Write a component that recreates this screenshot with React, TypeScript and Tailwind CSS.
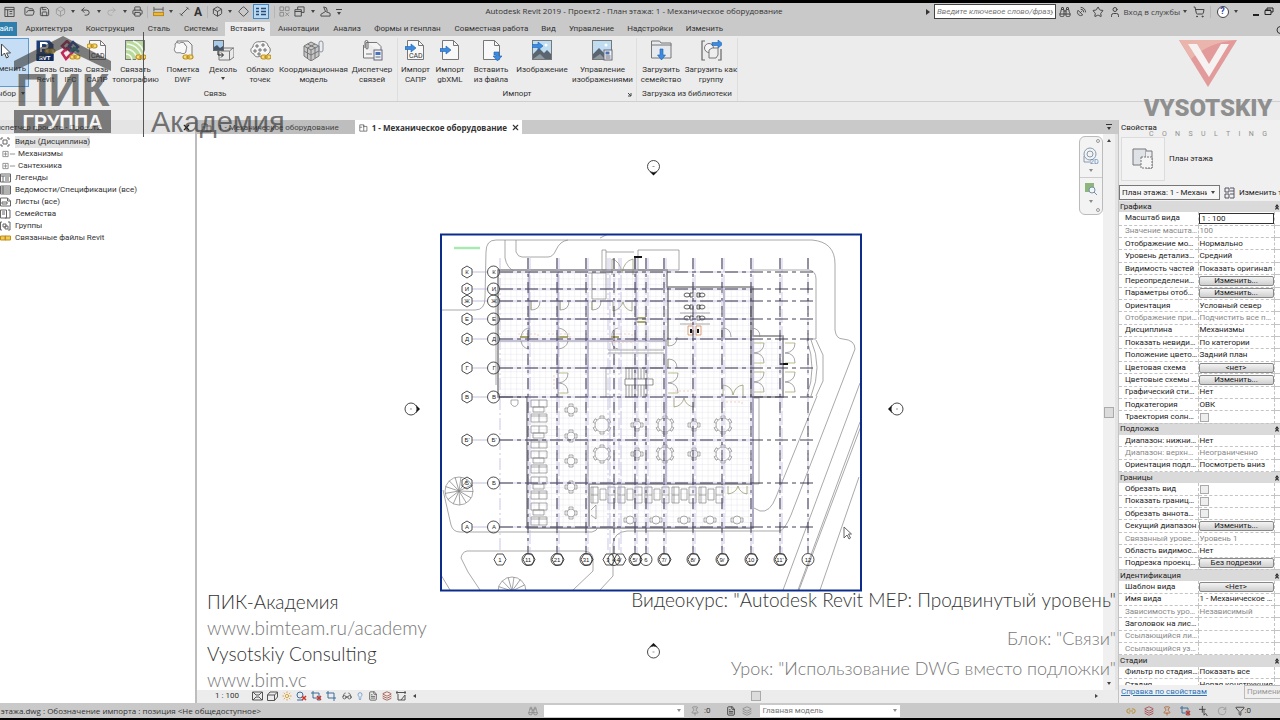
import React from 'react';
import { clsx } from 'clsx';
import {
  Binoculars,
  Box,
  ChevronsUp,
  Diamond,
  FileText,
  Filter,
  FolderOpen,
  Glasses,
  Layers,
  Lightbulb,
  Link2,
  Pin,
  Printer,
  Redo2,
  RotateCw,
  SatelliteDish,
  Save,
  ShoppingCart,
  Star,
  Sun,
  Undo2,
  User,
  X,
} from 'lucide-react';

interface RibbonItem {
  label: string[];
  width: string;
  icon: React.ReactNode;
  arrow?: boolean;
}

interface PropertyRow {
  name: string;
  value?: string;
  kind?: 'text' | 'button' | 'check' | 'input' | 'header';
  muted?: boolean;
}

/* ---------- shared glyphs ---------- */

const Caret: React.FC<{ className?: string }> = ({ className }) => (
  <svg viewBox="0 0 6 4" className={clsx('h-1 w-1.5 shrink-0 fill-[#444]', className)}>
    <path d="M1 0h4L3 3z" />
  </svg>
);

const Chain: React.FC<{ x: number; y: number }> = ({ x, y }) => (
  <g transform={`translate(${x} ${y})`} fill="#f7dc7a" stroke="#c0901c" strokeWidth="1.2">
    <rect x="0" y="0" width="5.5" height="4" rx="2" />
    <rect x="4.5" y="0" width="5.5" height="4" rx="2" />
    <path d="M3 2h4" />
  </g>
);

const BlueArrow: React.FC<{ transform: string }> = ({ transform }) => (
  <path d="M0 2.5h6V0l5 4-5 4V5.5H0z" transform={transform} fill="#3d8be0" stroke="#1f5fae" strokeWidth=".6" />
);

const Page: React.FC<{ children?: React.ReactNode }> = ({ children }) => (
  <>
    <path d="M2.500 .5h11l5 5v14h-16z" fill="#f8f8f8" stroke="#777" />
    <path d="M13.500 .5v5h5" fill="none" stroke="#777" />
    {children}
  </>
);

const RibbonIcon: React.FC<{ children: React.ReactNode }> = ({ children }) => (
  <svg viewBox="0 0 21 21" className="h-[21px] w-[21px]">
    {children}
  </svg>
);

const Landscape = () => (
  <>
    <rect x=".5" y=".5" width="19" height="19" fill="#bfdcf0" stroke="#777" />
    <circle cx="14" cy="5" r="1.500" fill="#fff" />
    <path d="M1 19v-5l6-6 5 5 3-3 4 4v5z" fill="#596672" />
    <path d="M1 19l7-5 5 5z" fill="#9098a0" />
  </>
);

/* ---------- ribbon content ---------- */

const linkItems: RibbonItem[] = [
  {
    label: ['Связь', 'Revit'],
    width: 'w-[25px]',
    icon: (
      <RibbonIcon>
        <path d="M1.500 .5h13l4 4v16h-17z" fill="#1d3f77" />
        <path d="M6 12V3h4a2.500 2.500 0 010 5H7" fill="none" stroke="#fff" strokeWidth="2" />
        <rect x="1.500" y="14" width="17" height="7" fill="#0d2b60" />
        <text x="4" y="20" fontSize="6" fontWeight="bold" fill="#fff">RVT</text>
        <Chain x={10} y={9} />
      </RibbonIcon>
    ),
  },
  {
    label: ['Связь', 'IFC'],
    width: 'w-[25px]',
    icon: (
      <RibbonIcon>
        <g fill="none" strokeWidth="2.500">
          <path d="M2 6l5-5 4 4-5 5z" stroke="#b5325d" />
          <path d="M9 6l4-4 5 5-5 4z" stroke="#3551a0" />
          <path d="M2 13l5-5 5 5-6 6z" stroke="#c02a5c" />
          <path d="M10 12l4-4 5 4" stroke="#36889b" />
        </g>
        <Chain x={10} y={15} />
      </RibbonIcon>
    ),
  },
  {
    label: ['Связь', 'САПР'],
    width: 'w-[28px]',
    icon: (
      <RibbonIcon>
        <Page>
          <text x="4" y="18" fontSize="7" fill="#333">CAD</text>
        </Page>
        <Chain x={0} y={4} />
      </RibbonIcon>
    ),
  },
  {
    label: ['Связать', 'топографию'],
    width: 'w-[49px]',
    icon: (
      <RibbonIcon>
        <rect x=".5" y=".5" width="19" height="19" fill="#b8d99b" stroke="#777" />
        <g fill="none" stroke="#f3f8ee" strokeWidth="1.500">
          <path d="M1 14a6 6 0 016 6M1 9a11 11 0 0111 11M2 4a16 16 0 0115 16M8 1a20 20 0 0112 14" />
        </g>
        <Chain x={11} y={15} />
      </RibbonIcon>
    ),
  },
  {
    label: ['Пометка', 'DWF'],
    width: 'w-[46px]',
    icon: (
      <RibbonIcon>
        <path d="M4 3.500V1h11l4 4v13h-9" fill="#f4f4f4" stroke="#777" />
        <path d="M2 4c2-3 4 0 5-1s5-1 5 2c3 1 1 4 1 6 0 3-4 3-5 2s-6 1-6-2c-2-2 1-3 0-7z" fill="#f9f9f9" stroke="#777" />
        <Chain x={10} y={15} />
      </RibbonIcon>
    ),
  },
  {
    label: ['Деколь'],
    width: 'w-[34px]',
    arrow: true,
    icon: (
      <RibbonIcon>
        <path d="M6 11l5-3h10v9l-4 3H6z" fill="#e9e9e9" stroke="#777" />
        <path d="M16.500 20V11h-9M16.500 11L20 8" fill="none" stroke="#777" />
        <rect x=".5" y=".5" width="10" height="10" fill="#a9cbea" stroke="#666" />
        <path d="M1 10V7l3-2 3 3 3-2v4z" fill="#46566a" />
        <path d="M5 11v4h5M8 12.500l2.500 2.500L8 17.500" fill="none" stroke="#222" />
      </RibbonIcon>
    ),
  },
  {
    label: ['Облако', 'точек'],
    width: 'w-[40px]',
    icon: (
      <RibbonIcon>
        <path d="M3 7c0-4 4-6 7-5 4-2 8 1 8 4 3 2 3 6 0 8-2 3-6 3-8 2-3 2-6 0-6-2-4-1-4-6-1-7z" fill="#f6f6f6" stroke="#777" />
        <path d="M6 5h2v2H6zM12 4h2v2h-2zM4 10h2v2H4zM9 9h2v2H9zM14 9h2v2h-2zM8 13h2v2H8z" fill="none" stroke="#555" strokeWidth=".8" />
        <Chain x={11} y={15} />
      </RibbonIcon>
    ),
  },
  {
    label: ['Координационная', 'модель'],
    width: 'w-[67px]',
    icon: (
      <RibbonIcon>
        <path d="M1 6l7-4 8 4v10l-8 5-7-5z" fill="#c6c6c6" stroke="#777" />
        <path d="M1 6l7 4 8-4M8 10v11M1 11l7 4 8-4M4.500 8v10M12 8v10M4.500 4l8 4M12 4L4.500 8" fill="none" stroke="#777" />
        <path d="M16 10V3a2 2 0 014 0v7a2 2 0 01-4 0" fill="none" stroke="#8a95a5" />
      </RibbonIcon>
    ),
  },
  {
    label: ['Диспетчер', 'связей'],
    width: 'w-[50px]',
    icon: (
      <RibbonIcon>
        <path d="M1.500 5v13h13M4 2.500h11l4 4V11" fill="#f4f4f4" stroke="#777" />
        <rect x="12" y="10" width="8" height="10" fill="#eef2f8" stroke="#667" />
        <path d="M13.500 12h5v3h-5z" fill="#4a72b8" />
        <path d="M13.500 17h5" stroke="#667" />
        <path d="M3 8V2a1.500 1.500 0 013 0v6a1 1 0 01-2 0V3" fill="none" stroke="#666" />
        <path d="M4 14h6" stroke="#777" />
      </RibbonIcon>
    ),
  },
];

const importItems: RibbonItem[] = [
  {
    label: ['Импорт', 'САПР'],
    width: 'w-[35px]',
    icon: (
      <RibbonIcon>
        <Page>
          <text x="4" y="18" fontSize="7" fill="#333">CAD</text>
        </Page>
        <BlueArrow transform="translate(0 4)" />
      </RibbonIcon>
    ),
  },
  {
    label: ['Импорт', 'gbXML'],
    width: 'w-[34px]',
    icon: (
      <RibbonIcon>
        <Page />
        <BlueArrow transform="translate(0 6)" />
      </RibbonIcon>
    ),
  },
  {
    label: ['Вставить', 'из файла'],
    width: 'w-[48px]',
    icon: (
      <RibbonIcon>
        <Page />
        <path d="M13 12h5v4h3l-4.500 5-4.500-5h3v-1h-2z" fill="#3d8be0" stroke="#1f5fae" strokeWidth=".6" />
      </RibbonIcon>
    ),
  },
  {
    label: ['Изображение'],
    width: 'w-[54px]',
    icon: (
      <RibbonIcon>
        <Landscape />
        <BlueArrow transform="translate(0 2)" />
      </RibbonIcon>
    ),
  },
  {
    label: ['Управление', 'изображениями'],
    width: 'w-[67px]',
    icon: (
      <RibbonIcon>
        <Landscape />
        <rect x="12" y="10" width="8" height="10" fill="#f5f5f5" stroke="#667" />
        <path d="M13.500 11.500h4v3h-4z" fill="#4a72b8" />
        <path d="M13.500 16h5M13.500 18h5" stroke="#667" />
      </RibbonIcon>
    ),
  },
];

const libraryItems: RibbonItem[] = [
  {
    label: ['Загрузить', 'семейство'],
    width: 'w-[48px]',
    icon: (
      <RibbonIcon>
        <path d="M.5 18V1h8l1.500 2h10v15z" fill="#e6e9ee" stroke="#777" />
        <path d="M.5 5h20" stroke="#777" />
        <BlueArrow transform="translate(14.500 9) rotate(90)" />
      </RibbonIcon>
    ),
  },
  {
    label: ['Загрузить как', 'группу'],
    width: 'w-[52px]',
    icon: (
      <RibbonIcon>
        <path d="M4 1H1v19h3M17 20h3V9" fill="none" stroke="#666" strokeWidth="1.200" />
        <circle cx="8" cy="8" r="4.500" fill="#f5f5f5" stroke="#777" />
        <path d="M8 10l3-2h6v7l-2 3H8z" fill="#eee" stroke="#777" />
        <BlueArrow transform="translate(11 0)" />
      </RibbonIcon>
    ),
  },
];

const RibbonGroup: React.FC<{ title: string; items: RibbonItem[]; launcher?: boolean }> = ({ title, items, launcher }) => (
  <section className="relative flex flex-col border-r border-[#dedede]">
    <div className="flex h-[49px]">
      {items.map((item) => (
        <button key={item.label.join(' ')} className={clsx('flex shrink-0 flex-col items-center pt-0.5', item.width)}>
          {item.icon}
          <span className="mt-1 flex flex-col items-center leading-[10px] whitespace-nowrap">
            {item.label.map((line) => (
              <span key={line}>{line}</span>
            ))}
          </span>
          {item.arrow && <Caret className="mt-0.5" />}
        </button>
      ))}
    </div>
    <h2 className="pt-0.5 text-center leading-[10px]">{title}</h2>
    {launcher && (
      <svg viewBox="0 0 5 5" className="absolute right-1 bottom-1 h-[5px] w-[5px]" fill="none" stroke="#444">
        <path d="M1 1l3 3M4 1v3H1" />
      </svg>
    )}
  </section>
);

/* ---------- title bar ---------- */

const quickIcon = 'h-[11px] w-[11px] shrink-0 text-[#444]';

const Separator = () => <span className="h-3 w-px bg-[#b5b5b5]" />;

const TitleBar = () => (
  <header className="flex h-[19px] shrink-0 items-center bg-[#c9c9c9] pb-0.5">
    <div className="flex w-[342px] shrink-0 items-center justify-between pl-1">
      <svg viewBox="0 0 12 12" className={quickIcon} fill="none" stroke="currentColor">
        <path d="M1 1.500h10v10H1zM1 4h10M4 4v7M6 6h3M6 8.500h3" />
      </svg>
      <span />
      <FolderOpen className={quickIcon} />
      <Save className={quickIcon} />
      <Box className="h-[11px] w-[11px] text-[#999]" />
      <Caret />
      <Undo2 className={quickIcon} />
      <Caret />
      <Redo2 className="h-[11px] w-[11px] text-[#aaa]" />
      <Caret />
      <Printer className={quickIcon} />
      <Separator />
      <svg viewBox="0 0 12 12" className={quickIcon} fill="none" stroke="#555">
        <path d="M1 1v5M11 1v5M1 3.500h10" />
        <rect x=".5" y="7" width="11" height="3.500" fill="#e9b83c" stroke="#b58617" />
      </svg>
      <Caret />
      <svg viewBox="0 0 12 12" className={quickIcon} fill="none" stroke="currentColor">
        <path d="M2 10l8-8M1 8l3 3M8 1l3 3" />
      </svg>
      <span className="text-[12px] font-bold text-[#333]">A</span>
      <Separator />
      <Box className={quickIcon} />
      <Caret />
      <Diamond className={quickIcon} />
      <svg viewBox="0 0 16 15" className="h-[15px] w-4 shrink-0">
        <rect x=".5" y=".5" width="15" height="14" fill="#b9d9f3" stroke="#3d86c6" />
        <path d="M3 4.500h3M3 7.500h3M3 10.500h3M8 4.500h5M8 7.500h5M8 10.500h5" stroke="#2a4c74" strokeWidth="1.500" />
      </svg>
      <Separator />
      <svg viewBox="0 0 12 12" className={quickIcon} fill="none" stroke="#888">
        <path d="M1 1h4v4H1zM7 1h4v4H7zM1 7h4v4H1zM7 7l4 4M11 7l-4 4" />
      </svg>
      <svg viewBox="0 0 12 12" className={quickIcon} fill="none" stroke="currentColor">
        <path d="M1 4h7v7H1zM4 4V1h7v6H8M1 6h7" />
      </svg>
      <Caret />
      <svg viewBox="0 0 12 12" className={quickIcon} fill="none" stroke="currentColor">
        <path d="M4 1l2 5-5 3v2h10V8L6 6M4 1l3 1 1 4" />
      </svg>
      <svg viewBox="0 0 6 6" className="h-1.5 w-1.5 fill-[#444]">
        <path d="M0 0h6v1H0zM1 3h4L3 6z" />
      </svg>
    </div>
    <h1 className="min-w-0 flex-1 truncate pb-0.5 text-center font-['Open_Sans','Noto_Sans',sans-serif] text-[#333]">
      Autodesk Revit 2019 - Проект2 - План этажа: 1 - Механическое оборудование
    </h1>
    <div className="flex w-[354px] shrink-0 items-center text-[#444]">
      <svg viewBox="0 0 4 6" className="mr-1 h-1.5 w-1 fill-[#333]">
        <path d="M0 0l4 3-4 3z" />
      </svg>
      <input
        aria-label="Поиск"
        placeholder="Введите ключевое слово/фразу"
        className="h-[15px] w-[122px] border border-[#444] bg-white px-0.5 italic outline-none placeholder:text-[#777]"
      />
      <div className="flex flex-1 items-center justify-between pr-1.5 pl-[3px]">
        <Binoculars className="h-3 w-3" />
        <SatelliteDish className="h-[11px] w-[11px]" />
        <Star className="h-3 w-3" />
        <button className="flex items-center gap-0.5 font-['Open_Sans','Noto_Sans',sans-serif] whitespace-nowrap">
          <User className="h-3 w-3" />
          Вход в службы
          <Caret />
        </button>
        <ShoppingCart className="h-3 w-3" />
        <Separator />
        <button aria-label="Справка" className="flex items-center gap-1">
          <span className="flex h-3 w-3 items-center justify-center rounded-full border border-[#444] bg-white text-[9px] leading-none font-bold text-[#2b3fa0]">?</span>
          <Caret />
        </button>
        <span className="w-1" />
        <button aria-label="Свернуть" className="mt-1.5 h-0.5 w-1.5 bg-[#222]" />
        <button aria-label="Восстановить">
          <svg viewBox="0 0 10 9" className="h-[9px] w-2.5" fill="none" stroke="#222">
            <path d="M1 3.500h6v4H1zM3 3V1h6v4H7M1 3h6" />
          </svg>
        </button>
      </div>
    </div>
  </header>
);

const menuTabs = [
  { label: 'Архитектура', width: 'w-[60px]' },
  { label: 'Конструкция', width: 'w-[62px]' },
  { label: 'Сталь', width: 'w-9' },
  { label: 'Системы', width: 'w-12' },
  { label: 'Вставить', width: 'w-[45px]' },
  { label: 'Аннотации', width: 'w-[57px]' },
  { label: 'Анализ', width: 'w-10' },
  { label: 'Формы и генплан', width: 'w-[81px]' },
  { label: 'Совместная работа', width: 'w-[87px]' },
  { label: 'Вид', width: 'w-[27px]' },
  { label: 'Управление', width: 'w-[59px]' },
  { label: 'Надстройки', width: 'w-[58px]' },
  { label: 'Изменить', width: 'w-[51px]' },
];

const MenuTabs = () => (
  <nav className="flex h-3.5 shrink-0 bg-[#c9c9c9]">
    <button className="mr-0.5 flex w-[17px] shrink-0 items-center justify-end overflow-hidden bg-[#2f7fae] pr-1 text-white">Файл</button>
    {menuTabs.map(({ label, width }) => (
      <button
        key={label}
        className={clsx('shrink-0 text-center whitespace-nowrap', width, label === 'Вставить' && 'bg-[#ececec]')}
      >
        {label}
      </button>
    ))}
    <svg viewBox="0 0 4 8" className="mt-1 ml-auto h-2 w-1" fill="none" stroke="#333">
      <path d="M4 .5Q1 1 1 4t3 3.500" />
    </svg>
  </nav>
);

const Ribbon = () => (
  <div className="flex h-[66px] shrink-0 border-b border-[#cfcfcf] bg-[#ececec] pt-0.5">
    <section className="w-[33px] shrink-0">
      <button className="flex h-[49px] w-[29px] flex-col items-end overflow-hidden border border-l-0 border-[#5b9bd5] bg-[#c5def5] pr-0.5">
        <svg viewBox="0 0 12 16" className="mt-1 mr-3.5 h-4 w-3" fill="#fff" stroke="#444">
          <path d="M1.500 1v12l3-3 2 5 2-1-2-4h4z" />
        </svg>
        <span className="mt-[5px] leading-[10px]">Изменить</span>
      </button>
      <div className="flex w-[26px] items-center justify-end gap-1 overflow-hidden pt-0.5 leading-[10px]">
        Выбор <Caret />
      </div>
    </section>
    <RibbonGroup title="Связь" items={linkItems} />
    <RibbonGroup title="Импорт" items={importItems} launcher />
    <RibbonGroup title="Загрузка из библиотеки" items={libraryItems} />
  </div>
);

/* ---------- project browser ---------- */

const treeIcons: Record<string, React.ReactNode> = {
  views: <path d="M1 3V1h2M7 1h2v2M9 7v2H7M3 9H1V7M3 3h4v4H3z" />,
  legend: <path d="M.5 1h10v8H.5zM.5 3h10M3 3v6M5 5h4M5 7h4" />,
  table: <path d="M.5 1h10v8H.5zM.5 3h10M.5 5h10M.5 7h10M3 1v8" />,
  sheet: <path d="M.5 1h7l3 3v5H.5zM7.500 1v3h3M2 5h5v2H2z" />,
  family: <path d="M.5 1h6v8h-6zM8 1h2v8H5M2 3h3M2 5h3" />,
  group: <path d="M2 1H.5v8H2M8 1h2v8H8M3 3h3v3H3zM5 5h3v3H5z" />,
  link: <path d="M.5 3h5v4h-5zM5 3h5.500v4H5z" stroke="#c0901c" fill="#f1cc58" />,
};

const treeItems = [
  { label: 'Виды (Дисциплина)', icon: 'views', selected: true },
  { label: 'Механизмы', child: true },
  { label: 'Сантехника', child: true },
  { label: 'Легенды', icon: 'legend' },
  { label: 'Ведомости/Спецификации (все)', icon: 'table' },
  { label: 'Листы (все)', icon: 'sheet' },
  { label: 'Семейства', icon: 'family' },
  { label: 'Группы', icon: 'group' },
  { label: 'Связанные файлы Revit', icon: 'link' },
];

const ProjectBrowser = () => (
  <aside className="flex w-[197px] shrink-0 flex-col border-r-2 border-[#bdbdbd] bg-white">
    <div className="flex h-3.5 items-center justify-between bg-[#e4e4e4] pt-px pr-1">
      <div className="flex w-[101px] justify-end overflow-hidden whitespace-nowrap">Диспетчер проекта - Проект2</div>
      <X className="h-[9px] w-[9px] text-[#222]" strokeWidth={3} />
    </div>
    <ul className="pt-0.5">
      {treeItems.map((item) => (
        <li key={item.label} className="flex h-3 items-center">
          {item.child ? (
            <svg viewBox="0 0 16 8" className="mr-0.5 ml-0.5 h-2 w-3.5" fill="none" stroke="#888">
              <path d="M1 1h6v6H1zM2 4h4M4 2v4M9 4h6" />
            </svg>
          ) : (
            <svg viewBox="0 0 11 10" className="mr-1 h-2.5 w-[11px]" fill="none" stroke="#666">
              {treeIcons[item.icon as string]}
            </svg>
          )}
          <span className={clsx('leading-3', item.selected && 'bg-[#e2e2e2]')}>{item.label}</span>
        </li>
      ))}
    </ul>
  </aside>
);

/* ---------- floor plan ---------- */

const colAxes = [
  { x: 500, label: '1' },
  { x: 528, label: '11' },
  { x: 557, label: '21' },
  { x: 586, label: '31' },
  { x: 608, label: '3' },
  { x: 614, label: '4' },
  { x: 619, label: '4/' },
  { x: 635, label: '5/' },
  { x: 646, label: '6' },
  { x: 664, label: '7/' },
  { x: 693, label: '8/' },
  { x: 722, label: '9/' },
  { x: 751, label: '10' },
  { x: 780, label: "11'" },
  { x: 808, label: '12' },
];

const rowAxes = [
  { y: 272, label: 'К' },
  { y: 289, label: 'И' },
  { y: 301, label: 'Ж' },
  { y: 319, label: 'Е' },
  { y: 339, label: 'Д' },
  { y: 368, label: 'Г' },
  { y: 397, label: 'В' },
  { y: 440, label: "Б'" },
  { y: 483, label: 'Б' },
  { y: 527, label: 'А' },
];

const hexagon = (cx: number, cy: number) =>
  `M${cx - 6} ${cy}l3-5.500h6l3 5.500-3 5.500h-6z`;

const uprightHexagon = (cx: number, cy: number) =>
  `M${cx} ${cy - 6}l5 3v6l-5 3-5-3v-6z`;

const doors = [
  [531, 301, 1], [560, 301, 1], [592, 301, 1],
  [668, 337, 1], [722, 337, -1], [751, 337, -1], [668, 368, -1],
];

const doubleDoors = [
  [558, 373], [668, 373], [754, 343], [754, 372], [785, 343], [785, 372],
];

const range = (count: number) => Array.from({ length: count }, (_, i) => i);

const SmallTable: React.FC<{ x: number; y: number }> = ({ x, y }) => (
  <g transform={`translate(${x} ${y})`}>
    <circle r="4" />
    <path d="M-2-4v-2h4v2M-2 4v2h4V4M-4-2h-2v4h2M4-2h2v4H4" />
  </g>
);

const LargeTable: React.FC<{ x: number; y: number }> = ({ x, y }) => (
  <g transform={`translate(${x} ${y})`}>
    <circle r="7" />
    {range(6).map((i) => (
      <path key={i} d="M-2-7v-2h4v2" transform={`rotate(${i * 60})`} />
    ))}
  </g>
);

const Tree: React.FC<{ x: number; y: number }> = ({ x, y }) => (
  <g transform={`translate(${x} ${y})`}>
    <circle r="14" />
    {range(13).map((i) => (
      <path key={i} d="M0 0L2-14" transform={`rotate(${i * 28})`} />
    ))}
  </g>
);

const ElevationMark: React.FC<{ x: number; y: number; angle: number }> = ({ x, y, angle }) => (
  <g transform={`translate(${x} ${y}) rotate(${angle})`}>
    <path d="M-4 5L0 9l4-4z" fill="#111" />
    <circle r="6" fill="#fff" stroke="#333" strokeWidth=".9" />
    <path d="M-1 0h2" stroke="#999" />
  </g>
);

const FloorPlan = () => (
  <svg viewBox="197 134 906 556" className="absolute inset-0 h-full w-full" fontFamily="Liberation Sans">
    <defs>
      <pattern id="tiles" width="5.800" height="5.800" patternUnits="userSpaceOnUse">
        <path d="M0 0h5.800M0 0v5.800" stroke="#dcdce6" strokeWidth=".7" fill="none" />
      </pattern>
      <clipPath id="sheet">
        <rect x="441" y="234" width="420" height="356" />
      </clipPath>
    </defs>

    <g clipPath="url(#sheet)" fill="none" stroke="#848484" strokeWidth=".7">
      {/* site contours */}
      <path d="M441 310h34q10 0 10-12l1-46q0-12 10-12h316q23 2 23 24v66q1 9 8 9 12 1 12 10L791 515q-6 14-11 16" />
      <path d="M505 240v18q2 10 9 13M516 240v12q2 5 6 5h26q5 0 8-7 4-9 12-10M600 238l8-4" />
      <path d="M817 396L776 497q-6 16-16 14l-6-3M860 383L783 590M860 422L798 590M861 426L799 590M859 477L820 590" />
      <path d="M443 490l8 35q2 7 9 7h132q5-1 6-5M461 558q1-6 6-7h117q9 1 9 8v12l-20 19M461 558l7 14 12 18M441 575l9 15M600 590l13-14v-32q1-12 14-13h153" />
      <path d="M751 270h58q7 1 7 9v60h-3M816 340l7 15v26l-7 15M811 340q12 27 0 56M807 340q10 28 0 56" />
      <path d="M638 250h41v20h-41zM602 250h4v20h-4zM606 252h28" />
      <Tree x={459} y={491} />
      <Tree x={512} y={591} />
      <path d="M454 248h26" stroke="#a9e8b0" strokeWidth="2.500" />

      {/* floor finish */}
      <path d="M500 272h167v17h84v50h31v58h-31v130H528V397h-28z" fill="url(#tiles)" stroke="none" />

      {/* walls */}
      <g stroke="#858585" strokeWidth="1.500">
        <path d="M498 270h169v17h86v49h30v61h-30v131H527V397h-29z" />
        <path d="M588 484h165M589 484v43M668 287v52M751 289v108" />
      </g>
      <path d="M588 273h18v26h-14v-26" stroke="#858585" />
      <path d="M754 398h5v86h-5M496 290v95M588 440v44M608 350h56M608 353h56M606 397v-29h58" />
      <g stroke="#b3afc6">
        <path d="M529 272v68M558 272v125M588 300v97M636 272v67M666 339v145M724 289v50M753 339v188M500 341h167" strokeWidth="1.500" />
      </g>

      {/* stairs */}
      <path d="M626 368v29M629 368v29M632 368v29M635 368v29M638 368v29M641 368v29M644 368v29M647 368v29" stroke="#777" />
      <path d="M625 379h28v6h-28z" fill="#fff" stroke="#666" />

      {/* doors */}
      {doors.map(([x, y, dir]) => (
        <g key={`${x}-${y}`}>
          <path d={`M${x} ${y}v${dir * 9}q9 0 9 ${-dir * 9}`} />
          <path d={`M${x} ${y}v${dir * 9}`} stroke="#a0a05c" />
        </g>
      ))}
      {doubleDoors.map(([x, y]) => (
        <g key={`${x}-${y}`}>
          <path d={`M${x + 10} ${y}q0 9-10 10q10 0 10 10`} />
          <path d={`M${x} ${y}h10M${x} ${y + 20}h10`} stroke="#a0a05c" />
        </g>
      ))}
      <path d="M521 337q1-8 8-9v9M521 341q1 7 8 8M568 337q-1-8-10-9M568 341q-1 7-10 8M612 337q-1-8 6-9M612 341q0 7 6 8" />
      <path d="M520 337h9M558 337h10M611 337h8M637 318h9M637 322h9" stroke="#8d8d3c" strokeWidth="1.500" />
      <path d="M612 275v-16q8 2 10 14 2-12 11-14v16M613 302v9q8-2 10-9 2 8 9 9v-9M674 398v9q8-1 10-9 2 8 10 9v-9M723 396v-11q9 1 10 10 2-9 10-10v11M728 486v8q8-1 10-8 2 7 9 8v-8" stroke="#8d8d60" />
      <path d="M518 334h20v8M548 334h22v8M612 334h20v8h-20zM554 375v15M675 391h18M722 402h20v4" stroke="#f0b9a6" strokeDasharray="2 2" />

      {/* sanitary block */}
      {[295, 307, 318].map((y) => (
        <g key={y} stroke="#222">
          <ellipse cx="687" cy={y} rx="3" ry="2" />
          <path d={`M690 ${y - 2}h3v4h-3zM697 ${y - 2}h3v4h-3z`} />
          <ellipse cx="702" cy={y} rx="3" ry="2" />
        </g>
      ))}
      <path d="M680 313h30M680 324h30" />
      <path d="M688 326h5v9h-5zM696 326h5v9h-5z" stroke="#d07a40" />
      <path d="M691 329v4M698 329v4M634 257h8M780 364h8" stroke="#111" strokeWidth="2" />
      <path d="M635 257v13" stroke="#333" />

      {/* furniture */}
      {[410, 436, 461, 487, 513].map((y) => (
        <g key={y}>
          <SmallTable x={571} y={y} />
          <path d={`M531 ${y - 10}h16v7h-16zM539 ${y - 10}v7M533 ${y - 3}h11v5h-11zM531 ${y + 4}h16v8h-16zM539 ${y + 4}v8M531 ${y + 6}h16`} />
        </g>
      ))}
      {[425, 454].map((y) => (
        <g key={y}>
          {[602, 665, 723].map((x) => <LargeTable key={x} x={x} y={y} />)}
          {[637, 694].map((x) => <SmallTable key={x} x={x} y={y} />)}
        </g>
      ))}
      {[591, 618, 645, 672, 699].map((x) => (
        <path key={x} d={`M${x} 487h7v16h-7zM${x} 495h7M${x + 9} 489h6v11h-6zM${x + 17} 487h7v16h-7zM${x + 17} 495h7M${x + 2} 487v16`} />
      ))}
      {[630, 656, 684, 710, 737].map((x) => (
        <path key={x} d={`M${x - 4} 520a4 4 0 018 0 4 4 0 01-8 0M${x - 4} 518h-2v4h2M${x + 4} 518h2v4h-2`} />
      ))}
      <path d="M511 400h7v4q-3 5-7 0zM591 510l5-5v14l-5-4" />

      {/* axes */}
      {colAxes.map(({ x }, i) => (
        <g key={x}>
          <path d={`M${x} 258V553`} stroke="#b4b0d8" strokeDasharray="12 3 2 3" />
          {i > 0 && i !== 4 && i !== 6 && (
            <path d={`M${x} 258V553`} stroke="#2c2a40" strokeWidth=".9" strokeDasharray="11 5 3 5" />
          )}
          {i > 0 && i < 14 && i !== 5 && <path d={`M${x + 2} 258V553`} stroke="#b9b5dc" strokeDasharray="14 3" />}
        </g>
      ))}
      {rowAxes.map(({ y }) => (
        <g key={y}>
          <path d={`M472 ${y}h15`} stroke="#a8a4d0" />
          <path d={`M500 ${y}h252`} stroke="#b9b5dc" />
          <path d={`M500 ${y}h314`} stroke="#2c293e" strokeDasharray="13 4 4 4" strokeWidth=".9" />
        </g>
      ))}
    </g>

    <g fill="none" stroke="#222" strokeWidth=".8">
      {colAxes.map(({ x }, i) => (
        <g key={x}>
          {i > 0 && i !== 4 && i !== 6 && <circle cx={x} cy="559.500" r="6" />}
          {i < 14 && i !== 5 && i !== 8 && <path d={hexagon(x + (i > 0 ? 1 : 0), 559.5)} />}
        </g>
      ))}
      {rowAxes.map(({ y }) => (
        <g key={y}>
          <circle cx="493.500" cy={y} r="6" />
          <path d={uprightHexagon(467, y)} />
        </g>
      ))}
    </g>
    <g fontSize="6" fill="#222" textAnchor="middle">
      {colAxes.map(({ x, label }) => (
        <text key={x} x={x} y="562">{label}</text>
      ))}
      {rowAxes.map(({ y, label }) => (
        <React.Fragment key={y}>
          <text x="494" y={y + 2}>{label}</text>
          <text x="467" y={y + 2}>{label}</text>
        </React.Fragment>
      ))}
    </g>

    <rect x="441" y="234.500" width="420" height="356" fill="none" stroke="#0c2c8c" strokeWidth="2" />

    <ElevationMark x={653.5} y={166.5} angle={0} />
    <ElevationMark x={411} y={409} angle={-90} />
    <ElevationMark x={897} y={409} angle={90} />
    <ElevationMark x={653.5} y={652} angle={180} />

    <path d="M844 527v11l3-3 2 4 1.500-1-2-4h3z" fill="#fff" stroke="#555" strokeWidth=".9" />
  </svg>
);

const NavigationBar = () => (
  <div className="absolute top-0.5 right-0 flex h-[79px] w-6 flex-col items-center justify-between rounded-md border border-[#bbb] bg-[#f3f3f3] py-0.5">
    <span className="flex w-full justify-end pr-0.5"><i className="h-1 w-1 rounded-full border border-[#999]" /></span>
    <svg viewBox="0 0 18 18" className="h-[18px] w-[18px]" fill="none" stroke="#8a9bb0">
      <circle cx="8" cy="7" r="6" />
      <circle cx="8" cy="7" r="3" />
      <path d="M2 9v6h7" />
      <text x="8" y="17" fontSize="7" fill="#5b86b8" stroke="none">2D</text>
    </svg>
    <Caret className="opacity-60" />
    <span className="h-px w-full bg-[#ccc]" />
    <svg viewBox="0 0 14 14" className="h-3.5 w-3.5">
      <path d="M1 1h9v9H1z" fill="#8db57c" />
      <circle cx="8" cy="8" r="3" fill="#eef5fb" stroke="#7890a8" />
      <path d="M10 10l3 3" stroke="#7890a8" />
    </svg>
    <Caret className="opacity-60" />
    <span className="flex w-full justify-end pr-0.5"><i className="h-1 w-1 rounded-full border border-[#999]" /></span>
  </div>
);

const TabIcon = () => (
  <svg viewBox="0 0 11 10" className="h-2.5 w-[11px]" fill="none" stroke="#666">
    <path d="M1 1h5v8H1zM6 3h4v6H6M1 4h3M6 1v3" />
  </svg>
);

const viewIcon = 'h-2.5 w-2.5';

const CropIcon: React.FC<{ mark?: boolean }> = ({ mark }) => (
  <svg viewBox="0 0 11 10" className="h-2.5 w-[11px]" fill="none" stroke="#3c6c9c">
    <path d="M2 0v7h8M0 2h8v8" />
    {mark && <path d="M6 5l4 4M10 5l-4 4" stroke="#c8372d" strokeWidth="1.500" />}
  </svg>
);

const Workspace = () => (
  <main className="flex min-w-0 flex-1 flex-col">
    <div className="flex h-3.5 shrink-0 items-center bg-[#c9c9c9]">
      <button className="flex h-full w-[158px] items-center gap-1.5 bg-[#bebebe] pt-px pl-1 whitespace-nowrap text-[#444]">
        <TabIcon />
        1 - Механическое оборудование
      </button>
      <div className="flex h-full w-[167px] items-center gap-1 bg-white pt-px pr-0.5 pl-1 whitespace-nowrap">
        <TabIcon />
        <button className="font-['Open_Sans','Noto_Sans',sans-serif] font-bold">1 - Механическое оборудование</button>
        <button aria-label="Закрыть вид" className="ml-auto"><X className="h-[9px] w-[9px]" strokeWidth={3} /></button>
      </div>
      <svg viewBox="0 0 6 6" className="mr-1.5 ml-auto h-1.5 w-1.5 fill-[#333]">
        <path d="M0 0h6v1H0zM1 3h4L3 6z" />
      </svg>
    </div>
    <div className="flex min-h-0 flex-1">
      <div className="relative min-w-0 flex-1 bg-white">
        <FloorPlan />
        <NavigationBar />
      </div>
      <div className="flex w-[15px] shrink-0 flex-col items-center justify-between border-r-3 border-[#e4e4e4] bg-[#f0f0f0] py-1">
        <Caret className="rotate-180" />
        <span className="h-[11px] w-2.5 border border-[#aaa] bg-[#dcdcdc]" />
        <Caret />
      </div>
    </div>
    <div className="flex h-[13px] shrink-0 items-center bg-[#ececec] pb-0.5 pl-[18px]">
      <span className="w-[37px]">1 : 100</span>
      <div className="flex w-[155px] items-center justify-between text-[#555]">
        <svg viewBox="0 0 11 10" className="h-2.5 w-[11px]" fill="none" stroke="currentColor">
          <path d="M.5 1h10v8H.5zM1 1l3 3h3l3-3M1 9l3-3h3l3 3" />
        </svg>
        <svg viewBox="0 0 11 10" className="h-2.5 w-[11px]" fill="none" stroke="currentColor">
          <path d="M.5 4h7v5.500h-7zM.5 4l2.500-3h7.500v5L7.500 9.500M7.500 4l3-3" />
        </svg>
        <Sun className="h-2.5 w-2.5 text-[#d89a1c]" />
        <svg viewBox="0 0 11 10" className="h-2.5 w-[11px]" fill="none" stroke="#3c6c9c">
          <circle cx="4" cy="4" r="3" />
          <path d="M1 9h6" />
          <path d="M6 5l4 4M10 5l-4 4" stroke="#c8372d" strokeWidth="1.500" />
        </svg>
        <CropIcon mark />
        <CropIcon />
        <Glasses className={viewIcon} />
        <Lightbulb className="h-2 w-2 text-[#4a80c8]" />
        <FileText className={viewIcon} />
        <Layers className="h-2.5 w-2.5 text-[#a04a3c]" />
        <svg viewBox="0 0 11 10" className="h-2.5 w-[11px]" fill="none" stroke="currentColor">
          <path d="M1 0v3M0 1.500h10M9 0v3M2 3v6h7V4M5 9l4-5" />
        </svg>
      </div>
      <Caret className="ml-1 rotate-90" />
      <div className="flex flex-1 justify-center">
        <span className="h-2.5 w-2.5 border border-[#aaa] bg-[#dcdcdc]" />
      </div>
      <Caret className="mr-[18px] -rotate-90" />
    </div>
  </main>
);

/* ---------- properties palette ---------- */

const properties: PropertyRow[] = [
  { name: 'Графика', kind: 'header' },
  { name: 'Масштаб вида', value: '1 : 100', kind: 'input' },
  { name: 'Значение масштаба', value: '100', muted: true },
  { name: 'Отображение модели', value: 'Нормально' },
  { name: 'Уровень детализации', value: 'Средний' },
  { name: 'Видимость частей', value: 'Показать оригинал' },
  { name: 'Переопределения видимости', value: 'Изменить...', kind: 'button' },
  { name: 'Параметры отображения', value: 'Изменить...', kind: 'button' },
  { name: 'Ориентация', value: 'Условный север' },
  { name: 'Отображение примыкания', value: 'Подчистить все примыкания', muted: true },
  { name: 'Дисциплина', value: 'Механизмы' },
  { name: 'Показать невидимые', value: 'По категории' },
  { name: 'Положение цветовой схемы', value: 'Задний план' },
  { name: 'Цветовая схема', value: '<нет>', kind: 'button' },
  { name: 'Цветовые схемы систем', value: 'Изменить...', kind: 'button' },
  { name: 'Графический стиль', value: 'Нет' },
  { name: 'Подкатегория', value: 'ОВК' },
  { name: 'Траектория солнечная', kind: 'check' },
  { name: 'Подложка', kind: 'header' },
  { name: 'Диапазон: нижний уровень', value: 'Нет' },
  { name: 'Диапазон: верхний уровень', value: 'Неограниченно', muted: true },
  { name: 'Ориентация подложки', value: 'Посмотреть вниз' },
  { name: 'Границы', kind: 'header' },
  { name: 'Обрезать вид', kind: 'check' },
  { name: 'Показать границу обрезки', kind: 'check' },
  { name: 'Обрезать аннотации', kind: 'check' },
  { name: 'Секущий диапазон', value: 'Изменить...', kind: 'button' },
  { name: 'Связанный уровень', value: 'Уровень 1', muted: true },
  { name: 'Область видимости', value: 'Нет' },
  { name: 'Подрезка проекции', value: 'Без подрезки', kind: 'button' },
  { name: 'Идентификация', kind: 'header' },
  { name: 'Шаблон вида', value: '<Нет>', kind: 'button' },
  { name: 'Имя вида', value: '1 - Механическое оборудование' },
  { name: 'Зависимость уровня', value: 'Независимый', muted: true },
  { name: 'Заголовок на листе', value: '' },
  { name: 'Ссылающийся лист', value: '', muted: true },
  { name: 'Ссылающийся узел', value: '', muted: true },
  { name: 'Стадии', kind: 'header' },
  { name: 'Фильтр по стадиям', value: 'Показать все' },
  { name: 'Стадия', value: 'Новая конструкция' },
];

const PropertyValue: React.FC<{ row: PropertyRow }> = ({ row }) => {
  if (row.kind === 'button') {
    return (
      <button className="block h-2.5 w-full rounded-xs border border-[#888] bg-gradient-to-b from-[#f4f4f4] to-[#cfcfcf] text-center leading-[8px]">
        {row.value}
      </button>
    );
  }
  if (row.kind === 'check') {
    return <input type="checkbox" aria-label={row.name} className="ml-px block h-[9px] w-[9px] appearance-none border border-[#aaa] bg-[#eee]" />;
  }
  if (row.kind === 'input') {
    return <input aria-label={row.name} defaultValue={row.value} className="block h-[11px] w-full border border-[#333] bg-white px-0.5 outline-none" />;
  }
  return <div className="truncate pl-px">{row.value}</div>;
};

const PropertiesPalette = () => (
  <aside className="flex w-[162px] shrink-0 flex-col overflow-hidden border-l border-[#c4c4c4] bg-[#f0f0f0] text-[#222]">
    <h2 className="h-3.5 shrink-0 pl-0.5 leading-[15px]">Свойства</h2>
    <div className="flex h-[50px] shrink-0 items-center gap-1 pl-0.5">
      <div className="flex h-11 w-11 items-center justify-center border border-[#dcdcdc] bg-[#f3f3f3]">
        <svg viewBox="0 0 22 22" className="h-[22px] w-[22px]" fill="#dfe3e8" stroke="#777">
          <path d="M1 1h13v16H1z" />
          <path d="M14 3h6v17h-6" fill="#eceef1" />
          <path d="M9 9h11v11H9z" fill="#f5f5f5" strokeDasharray="2 1" />
        </svg>
      </div>
      <span>План этажа</span>
    </div>
    <div className="flex h-[17px] shrink-0 items-center">
      <div className="grid w-[101px] shrink-0 items-center">
        <select
          aria-label="Тип вида"
          className="col-start-1 row-start-1 h-[15px] w-full appearance-none border border-[#777] bg-[#f6f6f6] pr-3 pl-0.5"
        >
          <option>План этажа: 1 - Механическое оборудование</option>
        </select>
        <Caret className="pointer-events-none z-10 col-start-1 row-start-1 mr-1 justify-self-end" />
      </div>
      <button className="ml-1 flex shrink-0 items-center gap-1 whitespace-nowrap">
        <svg viewBox="0 0 11 12" className="h-3 w-[11px]" fill="none" stroke="#556">
          <path d="M1 1h4v4H1zM6 1h4v10H6M1 7h4v4H1zM6 4h4M6 7h4" />
        </svg>
        Изменить тип
      </button>
    </div>
    <div className="min-h-0 flex-1 overflow-hidden">
      <table className="h-[491px] w-full table-fixed border-collapse bg-white leading-[10px]">
        <colgroup>
          <col className="w-[79px]" />
          <col />
          <col className="w-1.5" />
        </colgroup>
        <tbody>
          {properties.map((row) =>
            row.kind === 'header' ? (
              <tr key={row.name} className="bg-[#dadada]">
                <th colSpan={2} className="p-0 pl-px text-left font-normal">{row.name}</th>
                <td className="p-0">
                  <ChevronsUp className="h-2 w-1.5" preserveAspectRatio="none" strokeWidth={4} />
                </td>
              </tr>
            ) : (
              <tr key={row.name} className={clsx('border-b border-dashed border-[#c4c4c4]', row.muted && 'text-[#888]')}>
                <th className="truncate border-r border-dashed border-[#c4c4c4] p-0 pl-1.5 text-left font-normal">{row.name}</th>
                <td className="border-r border-dashed border-[#c4c4c4] p-0"><PropertyValue row={row} /></td>
                <td className="p-0" />
              </tr>
            ),
          )}
        </tbody>
      </table>
    </div>
    <div className="flex h-[18px] shrink-0 items-center justify-between pb-1 pl-0.5">
      <a href="#help" className="text-[#2a70b8] underline">Справка по свойствам</a>
      <button className="h-3.5 w-9 overflow-hidden border border-r-0 border-[#bbb] pl-0.5 text-left whitespace-nowrap text-[#999]">Применить</button>
    </div>
  </aside>
);

/* ---------- status bar ---------- */

const StatusSelect: React.FC<{ label: string; value?: string }> = ({ label, value }) => (
  <div className="grid w-[140px] shrink-0 items-center">
    <select
      aria-label={label}
      className="col-start-1 row-start-1 h-3 w-full appearance-none bg-white px-0.5 leading-3 text-[#777]"
    >
      {value && <option>{value}</option>}
    </select>
    <Caret className="pointer-events-none z-10 col-start-1 row-start-1 mr-0.5 justify-self-end opacity-60" />
  </div>
);

const StatusBar = () => (
  <footer className="flex h-[15px] shrink-0 items-center bg-[#c9c9c9]">
    <div className="flex w-[261px] shrink-0 justify-end overflow-hidden font-['Open_Sans','Noto_Sans',sans-serif] whitespace-nowrap">
      План этажа.dwg : Обозначение импорта : позиция &lt;Не общедоступное&gt;
    </div>
    <Binoculars className="mr-1.5 ml-[267px] h-2.5 w-2.5 shrink-0 text-[#888]" />
    <StatusSelect label="Рабочий набор" />
    <Pin className="ml-1.5 h-2.5 w-2.5 shrink-0 text-[#888]" />
    <span className="ml-1">:0</span>
    <FileText className="ml-4 h-2.5 w-2.5 shrink-0" />
    <Layers className="mr-2 ml-1.5 h-2.5 w-2.5 shrink-0 text-[#888]" />
    <StatusSelect label="Вариант конструкции" value="Главная модель" />
    <div className="mr-[29px] ml-auto flex items-center gap-2">
      <Link2 className="h-2.5 w-2.5 text-[#b58617]" />
      <Layers className="h-2.5 w-2.5 text-[#a8404a]" />
      <Pin className="h-2.5 w-2.5 text-[#b5602c]" />
      <CropIcon mark />
      <svg viewBox="0 0 12 12" className="h-2.5 w-2.5" fill="none" stroke="#333">
        <path d="M4 0v8M0 4h8M6 5v6l2-2 2 3" />
      </svg>
      <RotateCw className="h-2.5 w-2.5 text-[#999]" />
      <span className="flex items-center"><Filter className="h-2.5 w-2.5" />:0</span>
    </div>
  </footer>
);

/* ---------- video overlay ---------- */

const Watermarks = () => (
  <div className="pointer-events-none">
    <div className="absolute top-[33px] left-3.5 w-[97px] text-[#333] opacity-60">
      <svg viewBox="0 0 97 35" className="block h-[35px] w-full" fill="currentColor">
        <path d="M0 25L49 0l48 25v10L49 12 0 35z" />
      </svg>
      <div className="flex justify-center font-['Liberation_Sans',sans-serif] text-[46px] leading-[39px] font-bold">ПИК</div>
      <div className="h-[23px] bg-[#333] text-center font-['Liberation_Sans',sans-serif] text-[20px] leading-[24px] font-bold text-white">ГРУППА</div>
    </div>
    <div className="absolute top-[29px] left-[143px] h-[105px] w-px bg-[#555]" />
    <div className="absolute top-[103px] left-[151px] font-['Liberation_Sans',sans-serif] text-[29px] leading-8 text-[#333] opacity-65">Академия</div>

    <div className="absolute top-[37px] right-2 flex w-[128px] flex-col items-center text-[#8f8f8f]">
      <svg viewBox="0 0 58 48" className="h-12 w-[58px]">
        <path d="M0 0h58L29 47z" fill="#e29a9a" />
        <path d="M0 0h58Q30 2 12 19z" fill="#eab5ac" />
        <path d="M9 4h9l12 20L42 4h8L30 37z" fill="#f6f2f2" />
      </svg>
      <div className="mt-2 font-['Roboto','Liberation_Sans',sans-serif] text-[24px] leading-[24px] font-black">VYSOTSKIY</div>
      <div className="mt-2.5 flex w-[118px] justify-between text-[7px] leading-2">
        {'CONSULTING'.split('').map((letter, i) => (
          <span key={i}>{letter}</span>
        ))}
      </div>
    </div>

    <div className="absolute bottom-[25px] left-[207px] flex flex-col font-['Lato',sans-serif] text-[19px] leading-[26px] font-light text-[#333]">
      <span>ПИК-Академия</span>
      <span className="text-[#777]">www.bimteam.ru/academy</span>
      <span>Vysotskiy Consulting</span>
      <span className="text-[#777]">www.bim.vc</span>
    </div>
    <div className="absolute right-[164px] bottom-[35px] flex flex-col items-end font-['Lato',sans-serif] text-[18px] leading-[30px] font-light text-[#777]">
      <span className="mb-2 text-[19px] text-[#333]">Видеокурс: "Autodesk Revit MEP: Продвинутый уровень"</span>
      <span>Блок: "Связи"</span>
      <span>Урок: "Использование DWG вместо подложки"</span>
    </div>
  </div>
);

export default function App() {
  return (
    <div className="relative flex h-screen flex-col overflow-hidden border-t-3 border-b-2 border-black bg-[#ececec] font-['Roboto','Noto_Sans',sans-serif] text-[8px] leading-[12px] text-[#333]">
      <TitleBar />
      <MenuTabs />
      <Ribbon />
      <div className="h-[18px] shrink-0 bg-[#ececec]" />
      <div className="flex min-h-0 flex-1">
        <ProjectBrowser />
        <Workspace />
        <PropertiesPalette />
      </div>
      <StatusBar />
      <Watermarks />
    </div>
  );
}
